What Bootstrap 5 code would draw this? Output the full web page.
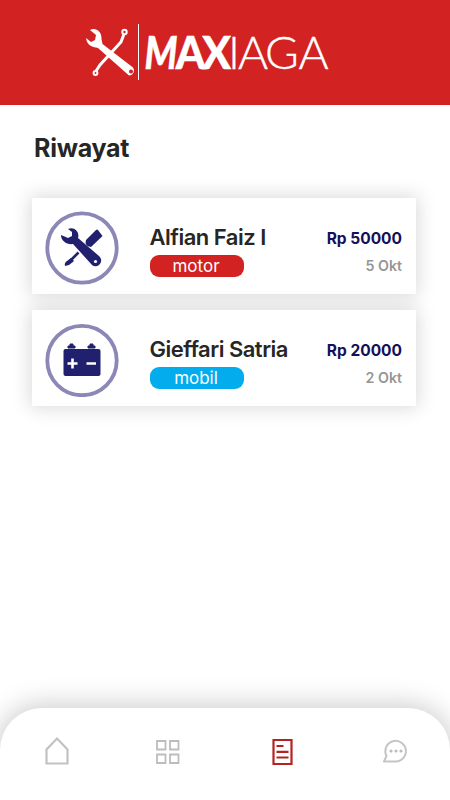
<!DOCTYPE html>
<html lang="id">
<head>
<meta charset="utf-8">
<meta name="viewport" content="width=device-width, initial-scale=1">
<title>Maxiaga - Riwayat</title>
<link href="https://cdn.jsdelivr.net/npm/bootstrap@5.3.0/dist/css/bootstrap.min.css" rel="stylesheet">
<style>
body { font-family: Inter, sans-serif; color: #262626; }
svg { display: block; }
.app { height: 800px; }
.topbar { height: 105px; background: #d22222; }
.page-title { font-size: 25px; line-height: 34px; font-weight: 700; letter-spacing: -.25px; margin: 26px 0 33px 34px; }
.history { margin: 0 34px 0 32px; gap: 16px; }
.entry { height: 96px; box-shadow: 0 0 18px 2px rgba(0,0,0,.15); padding: 13px 14px 0 13px; }
.info { margin-left: 30.5px; padding-top: 11px; }
.who { font-size: 22px; line-height: 30px; font-weight: 600; white-space: nowrap; letter-spacing: -.5px; }
.tag { width: 94px; height: 22px; border-radius: 9px; font-size: 17px; line-height: 23px; margin-top: 3px; padding-right: 1px; }
.tag-motor { background: #d22222; }
.tag-mobil { background: #03aced; }
.cost { padding-top: 17px; white-space: nowrap; }
.price { font-size: 15.5px; line-height: 22px; font-weight: 700; color: #15105c; }
.date { font-size: 14.2px; line-height: 20px; font-weight: 600; margin-top: 6px; color: #969696; }
.tabs { height: 92px; border-radius: 42px 42px 0 0; box-shadow: 0 0 28px 2px rgba(0,0,0,.22); padding: 26px 41px 0 43px; }
</style>
</head>
<body class="bg-white">
<div class="app d-flex flex-column overflow-hidden">
  <header class="topbar flex-shrink-0">
    <svg width="450" height="105" viewBox="0 0 450 105">
      <g stroke="#fff" fill="none">
        <path d="M96 71 100 65 121 42 124 34" stroke-width="3"/>
        <circle cx="124.5" cy="32" r="2.2" stroke-width="2"/>
        <circle cx="95.5" cy="73" r="1.9" stroke-width="2"/>
      </g>
      <path d="M90 30C95 27 102 31 101.5 39L102.5 44 133 67.5A5 5 0 0 1 129 75.5L98 48C93 47 87 46 86 38L91 42 95 40 96 35Z" fill="#fff"/>
      <circle cx="131" cy="71.5" r="2" fill="#d22222"/>
      <path d="M138.5 24V80" stroke="#fff"/>
      <g fill="#fff" stroke="#fff" stroke-width=".4" font-family="Lato" font-size="46">
        <text font-weight="900" font-style="italic" transform="translate(144.5 69) scale(.81 1)">M</text>
        <text x="0 28.5" font-weight="900" transform="translate(175.5 69) scale(.93 1)">AX</text>
        <text x="228 238 265 298.5" y="69" font-weight="300">IAGA</text>
      </g>
    </svg>
  </header>
  <main class="flex-grow-1">
    <h1 class="page-title">Riwayat</h1>
    <div class="history d-flex flex-column">
      <article class="entry bg-white d-flex">
        <svg class="flex-shrink-0" width="74" height="74" viewBox="0 0 74 74">
          <circle cx="37" cy="37" r="34.7" fill="#fff" stroke="#8b87b6" stroke-width="3.8"/>
          <path d="M41 29 51 19Q52 18 53 19L57.5 25 46 36Q39 35 41 29Z" fill="#20206f"/>
          <path d="M33.5 41.5 24 51" stroke="#20206f" stroke-width="2.6"/>
          <path d="M26 47 29 50 24 54 20 55Q19 52 22 50Z" fill="#20206f"/>
          <path d="M23 18C29 15 35 21 33 27L54 45A5.2 5.2 0 0 1 47 54L28 33C22 34 16 30 16 24L23 27 27 25 27 21Z" fill="#20206f"/>
          <circle cx="50.5" cy="50.5" r="1.6" fill="#fff"/>
        </svg>
        <div class="info"><div class="who">Alfian Faiz I</div><div class="tag tag-motor text-white text-center">motor</div></div>
        <div class="cost ms-auto text-end"><div class="price">Rp 50000</div><div class="date">5 Okt</div></div>
      </article>
      <article class="entry bg-white d-flex">
        <svg class="flex-shrink-0" width="74" height="74" viewBox="0 0 74 74">
          <circle cx="37" cy="37.5" r="34.7" fill="#fff" stroke="#8b87b6" stroke-width="3.8"/>
          <path d="M23 25V23H25V21H28V23H30V25ZM43 25V23H45V21H48V23H50V25Z" fill="#20206f" stroke="#20206f"/>
          <rect x="18.5" y="26" width="37" height="27" rx="2" fill="#20206f"/>
          <path d="M22.5 40.5H32.5M27.5 35.5V45.5M41.5 40.5H51" stroke="#fff" stroke-width="2.6"/>
        </svg>
        <div class="info"><div class="who">Gieffari Satria</div><div class="tag tag-mobil text-white text-center">mobil</div></div>
        <div class="cost ms-auto text-end"><div class="price">Rp 20000</div><div class="date">2 Okt</div></div>
      </article>
    </div>
  </main>
  <nav class="tabs bg-white d-flex justify-content-between flex-shrink-0" aria-label="Menu">
    <svg width="28" height="34" viewBox="0 0 28 34" fill="none" stroke="#c2c2c2" stroke-width="2.2"><path d="M3.5 29.5V15.5L14 4.5 24.5 15.5V29.5Z"/></svg>
    <svg width="28" height="34" viewBox="2.5 .5 28 34" fill="none" stroke="#bdbdbd" stroke-width="1.8"><path d="M3.5 7.5H12V16H3.5ZM16.5 7.5H25V16H16.5ZM3.5 21H12V29.5H3.5ZM16.5 21H25V29.5H16.5Z"/></svg>
    <svg width="28" height="34" viewBox="-.5 .5 28 34" fill="none" stroke="#b52320" stroke-width="2.2"><path d="M5 6.5H23V30.5H5ZM8 12.5H15M8 18.3H20M8 24H20"/></svg>
    <svg width="28" height="34" viewBox="0 0 28 34" fill="none" stroke="#c5c5c5" stroke-width="2"><path d="M3 27.5 5.5 22A10.3 10.3 0 1 1 15 27.5Z" stroke-linejoin="round"/><g fill="#bdbdbd" stroke="none"><circle cx="10" cy="17" r="1.6"/><circle cx="15" cy="17" r="1.6"/><circle cx="20" cy="17" r="1.6"/></g></svg>
  </nav>
</div>
<script src="https://cdn.jsdelivr.net/npm/bootstrap@5.3.0/dist/js/bootstrap.bundle.min.js"></script>
</body>
</html>
